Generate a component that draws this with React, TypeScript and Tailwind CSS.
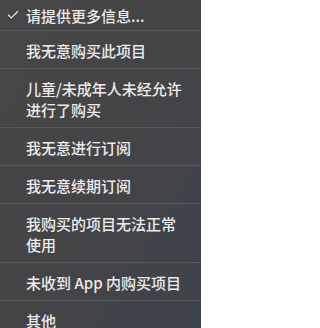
import { Check } from "lucide-react"

const items = [
  "我无意购买此项目",
  "儿童/未成年人未经允许进行了购买",
  "我无意进行订阅",
  "我无意续期订阅",
  "我购买的项目无法正常使用",
  "未收到 App 内购买项目",
  "其他",
]

export default function App() {
  return (
    <div
      className="h-[328px] w-[201px] overflow-hidden bg-gradient-to-br from-[#474747] via-[#444446] to-[#3d434c] text-[15px] leading-[21px] font-medium text-[#ececec]"
      style={{ fontFamily: '"Noto Sans CJK SC", "Noto Sans", sans-serif' }}
    >
      {/* selected option */}
      <div className="flex h-[30px] items-center pr-[13px]">
        <div className="flex w-[25px] justify-center pl-[1px]">
          <Check className="size-[14px]" strokeWidth={2} />
        </div>
        <span className="pl-[1px]">请提供更多信息...</span>
      </div>
      {items.map((label) => (
        <div
          key={label}
          className="border-t border-[#575859] pb-[7px] pl-[26px] pr-[13px] pt-[9px]"
        >
          {label}
        </div>
      ))}
    </div>
  )
}
